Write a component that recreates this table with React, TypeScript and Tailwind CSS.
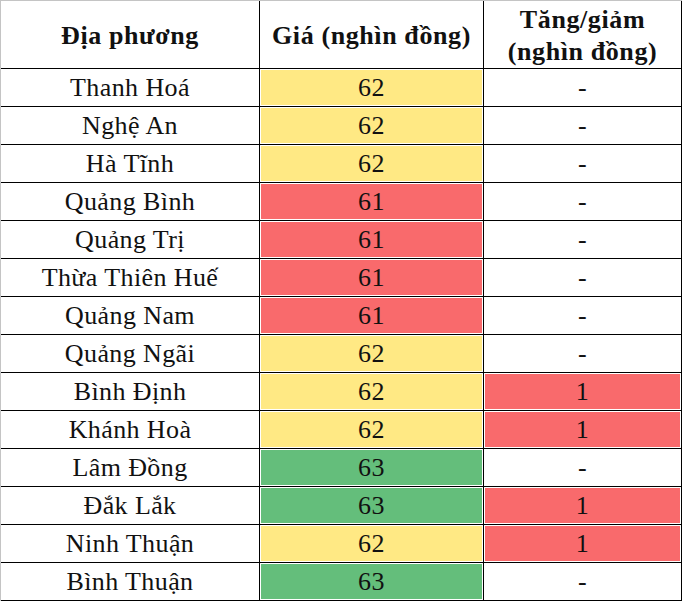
import React from 'react';

type Tone = 'yellow' | 'red' | 'green' | 'none';

const rows: { place: string; price: string; tone: Tone; change: string; changeTone: Tone }[] = [
  { place: 'Thanh Hoá', price: '62', tone: 'yellow', change: '-', changeTone: 'none' },
  { place: 'Nghệ An', price: '62', tone: 'yellow', change: '-', changeTone: 'none' },
  { place: 'Hà Tĩnh', price: '62', tone: 'yellow', change: '-', changeTone: 'none' },
  { place: 'Quảng Bình', price: '61', tone: 'red', change: '-', changeTone: 'none' },
  { place: 'Quảng Trị', price: '61', tone: 'red', change: '-', changeTone: 'none' },
  { place: 'Thừa Thiên Huế', price: '61', tone: 'red', change: '-', changeTone: 'none' },
  { place: 'Quảng Nam', price: '61', tone: 'red', change: '-', changeTone: 'none' },
  { place: 'Quảng Ngãi', price: '62', tone: 'yellow', change: '-', changeTone: 'none' },
  { place: 'Bình Định', price: '62', tone: 'yellow', change: '1', changeTone: 'red' },
  { place: 'Khánh Hoà', price: '62', tone: 'yellow', change: '1', changeTone: 'red' },
  { place: 'Lâm Đồng', price: '63', tone: 'green', change: '-', changeTone: 'none' },
  { place: 'Đắk Lắk', price: '63', tone: 'green', change: '1', changeTone: 'red' },
  { place: 'Ninh Thuận', price: '62', tone: 'yellow', change: '1', changeTone: 'red' },
  { place: 'Bình Thuận', price: '63', tone: 'green', change: '-', changeTone: 'none' },
];

const fills: Record<Tone, string> = {
  yellow: 'bg-[#ffe984]',
  red: 'bg-[#f96a6c]',
  green: 'bg-[#64be7b]',
  none: 'bg-white',
};

const Cell = ({ tone, children }: { tone: Tone; children: React.ReactNode }) => (
  <div className="border-r border-b border-black bg-white p-px">
    <div className={`${fills[tone]} h-full flex items-center justify-center pt-px`}>{children}</div>
  </div>
);

export default function App() {
  return (
    <div className="w-[692px] h-[607px] bg-white font-['Liberation_Serif',serif] text-[#111]">
      <div className="w-[682px] border-t border-l border-[#c4c4c4] grid grid-cols-[259px_224px_198px] grid-rows-[68px_repeat(14,38px)] text-[26px] tracking-[0.4px] leading-none">
        <div className="border-r border-b border-black flex items-center justify-center pt-[2px] font-bold tracking-[0.6px]">
          Địa phương
        </div>
        <div className="border-r border-b border-black flex items-center justify-center pt-[2px] font-bold tracking-[0.6px]">
          Giá (nghìn đồng)
        </div>
        <div className="border-r border-b border-black flex flex-col items-center justify-center pt-[3px] font-bold tracking-[0.6px] leading-[32px]">
          <span>Tăng/giảm</span>
          <span>(nghìn đồng)</span>
        </div>
        {rows.map((r) => (
          <React.Fragment key={r.place}>
            <Cell tone="none">{r.place}</Cell>
            <Cell tone={r.tone}>{r.price}</Cell>
            <Cell tone={r.changeTone}>{r.change}</Cell>
          </React.Fragment>
        ))}
      </div>
    </div>
  );
}
